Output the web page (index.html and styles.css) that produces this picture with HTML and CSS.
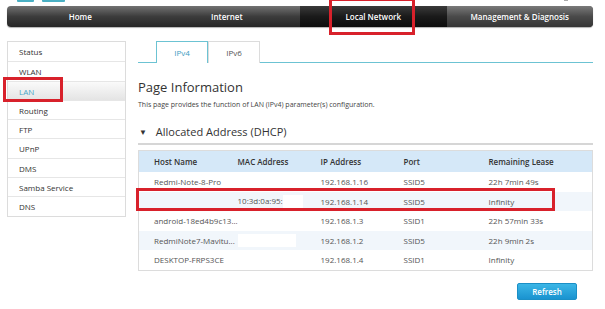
FILE: index.html
```html
<!DOCTYPE html>
<html>
<head>
    <meta charset="UTF-8" />
    <title>Local Network - LAN</title>
    <link rel="stylesheet" href="styles.css">
</head>
<body>
    <div class="page">
        <div class="logo-strip">
            <span class="logo-a"></span>
            <span class="logo-b"></span>
            <span class="logo-dot"></span>
        </div>

        <nav class="topnav">
            <a class="nav-item">Home</a>
            <a class="nav-item">Internet</a>
            <a class="nav-item active">Local Network</a>
            <a class="nav-item last">Management &amp; Diagnosis</a>
        </nav>

        <div class="mark mark-nav"></div>
        <div class="mark mark-lan"></div>
        <div class="mark mark-row"></div>

        <div class="main">
            <ul class="sidebar">
                <li>Status</li>
                <li>WLAN</li>
                <li class="current">LAN</li>
                <li>Routing</li>
                <li>FTP</li>
                <li>UPnP</li>
                <li>DMS</li>
                <li>Samba Service</li>
                <li>DNS</li>
            </ul>

            <div class="content">
                <div class="tabs">
                    <span class="tab active">IPv4</span>
                    <span class="tab">IPv6</span>
                </div>

                <h2 class="page-title">Page Information</h2>
                <p class="page-desc">This page provides the function of LAN (IPv4) parameter(s) configuration.</p>

                <h3 class="section-title"><span class="arrow">&#9660;</span> Allocated Address (DHCP)</h3>

                <table class="lease-table">
                    <thead>
                        <tr>
                            <th>Host Name</th>
                            <th>MAC Address</th>
                            <th>IP Address</th>
                            <th>Port</th>
                            <th>Remaining Lease</th>
                        </tr>
                    </thead>
                    <tbody>
                        <tr>
                            <td>Redmi-Note-8-Pro</td>
                            <td></td>
                            <td>192.168.1.16</td>
                            <td>SSID5</td>
                            <td>22h 7min 49s</td>
                        </tr>
                        <tr class="alt">
                            <td></td>
                            <td>10:3d:0a:95:<span class="blank b1"></span></td>
                            <td>192.168.1.14</td>
                            <td>SSID5</td>
                            <td>Infinity</td>
                        </tr>
                        <tr>
                            <td>android-18ed4b9c13...</td>
                            <td></td>
                            <td>192.168.1.3</td>
                            <td>SSID1</td>
                            <td>22h 57min 33s</td>
                        </tr>
                        <tr class="alt">
                            <td>RedmiNote7-Mavitu...</td>
                            <td><span class="blank b2"></span></td>
                            <td>192.168.1.2</td>
                            <td>SSID5</td>
                            <td>22h 9min 2s</td>
                        </tr>
                        <tr>
                            <td>DESKTOP-FRPS3CE</td>
                            <td></td>
                            <td>192.168.1.4</td>
                            <td>SSID1</td>
                            <td>Infinity</td>
                        </tr>
                    </tbody>
                </table>

                <div class="actions">
                    <button class="btn-refresh">Refresh</button>
                </div>
            </div>
        </div>
    </div>
</body>
</html>
```

FILE: styles.css
```css
:root {
    --teal: #6cc3d3;
    --border: #dcdcdc;
    --text: #444;
    --red: #d8212b;
}

body {
    margin: 0;
    font-family: 'Open Sans', 'Noto Sans', sans-serif;
    color: var(--text);
    background: #fff;
}

.page {
    position: relative;
    width: 605px;
    height: 309px;
    padding: 0 12px 0 7px;
    box-sizing: border-box;
    overflow: hidden;
}

/* logo, mostly cut off at the top */
.logo-strip {
    height: 6px;
    position: relative;
}

.logo-a,
.logo-b {
    position: absolute;
    top: -4px;
    height: 6px;
    background: #4ab0c4;
    border-radius: 1px;
}

.logo-a { left: 10px; width: 17px; }
.logo-b { left: 35px; width: 23px; }

.logo-dot {
    position: absolute;
    top: -2px;
    right: 25px;
    width: 4px;
    height: 3px;
    background: #aaa;
}

/* top navigation */
.topnav {
    display: flex;
    height: 21px;
    border-radius: 4px;
    overflow: hidden;
    background: linear-gradient(#727272, #3c3c3c 50%, #262626);
    box-shadow: 0 1px 1px rgba(0, 0, 0, 0.3);
}

.nav-item {
    flex: 1;
    text-align: center;
    line-height: 21px;
    font-size: 8px;
    font-weight: 600;
    color: #fff;
}

.nav-item.active {
    background: linear-gradient(#3a3a3a, #1a1a1a 50%, #0d0d0d);
}

.nav-item.last {
    background: linear-gradient(#7a7a7a, #4a4a4a 50%, #353535);
}

/* red annotation boxes */
.mark {
    position: absolute;
    border: 3px solid var(--red);
    box-sizing: border-box;
    pointer-events: none;
}

.mark-nav { left: 329px; top: -2px; width: 86px; height: 37px; }
.mark-lan { left: 3px; top: 77px; width: 60px; height: 25px; }
.mark-row { left: 136px; top: 188px; width: 419px; height: 23px; }

/* layout */
.main {
    display: flex;
    gap: 12px;
    margin-top: 14px;
}

.sidebar {
    list-style: none;
    margin: 0;
    padding: 0;
    width: 119px;
    flex-shrink: 0;
    border: 1px solid var(--border);
    box-sizing: border-box;
    align-self: flex-start;
}

.sidebar li {
    height: 19.3px;
    line-height: 19px;
    padding-left: 11px;
    font-size: 8px;
    color: #333;
    border-top: 1px solid #e6e6e6;
    box-sizing: border-box;
}

.sidebar li:first-child {
    border-top: none;
}

.sidebar li.current {
    color: #4aa7c7;
    background: linear-gradient(#fafafa, #e4e4e4);
}

.content {
    flex: 1;
}

.tabs {
    display: flex;
    padding-left: 18px;
    border-bottom: 1px solid var(--teal);
    height: 21px;
}

.tab {
    width: 52px;
    height: 22px;
    line-height: 21px;
    text-align: center;
    font-size: 8px;
    color: #555;
    border: 1px solid var(--border);
    border-bottom: none;
    box-sizing: border-box;
    background: #fff;
}

.tab.active {
    color: #3d9dbf;
    border-color: var(--teal);
}

.page-title {
    margin: 15px 0 0;
    font-size: 13px;
    font-weight: 400;
    color: #333;
    line-height: 18px;
}

.page-desc {
    margin: 4px 0 0;
    font-size: 7px;
    color: #444;
}

.section-title {
    margin: 15px 0 0;
    padding-bottom: 4px;
    font-size: 11px;
    font-weight: 400;
    color: #333;
    border-bottom: 2px solid #d6d6d6;
}

.arrow {
    font-size: 8px;
    margin: 0 6px 0 1px;
    vertical-align: 1px;
}

.lease-table {
    width: 100%;
    margin-top: 5px;
    border-collapse: collapse;
    border: 1px solid var(--border);
    font-size: 8px;
    table-layout: fixed;
}

.lease-table th {
    background: #d5e8f8;
    height: 21px;
    text-align: left;
    font-weight: 600;
    color: #333;
    padding: 0;
}

.lease-table td {
    height: 19.5px;
    padding: 0;
    color: #555;
    white-space: nowrap;
}

.lease-table th:nth-child(1),
.lease-table td:nth-child(1) { width: 99px; padding-left: 15px; box-sizing: border-box; }
.lease-table th:nth-child(2),
.lease-table td:nth-child(2) { width: 83px; }
.lease-table th:nth-child(3),
.lease-table td:nth-child(3) { width: 83px; }
.lease-table th:nth-child(4),
.lease-table td:nth-child(4) { width: 85px; }

.lease-table tr.alt td {
    background: #f1f6fb;
}

.blank {
    display: inline-block;
    height: 13px;
    background: #fff;
    vertical-align: middle;
}

.b1 { width: 20px; }
.b2 { width: 58px; }

.actions {
    display: flex;
    justify-content: flex-end;
    padding-right: 16px;
    margin-top: 12px;
}

.btn-refresh {
    width: 60px;
    height: 17px;
    padding: 0;
    border: 1px solid #1b8fc6;
    border-radius: 2px;
    background: linear-gradient(#3bb6e6, #1a93d0);
    color: #fff;
    font-family: inherit;
    font-size: 8px;
    font-weight: 600;
}
```
